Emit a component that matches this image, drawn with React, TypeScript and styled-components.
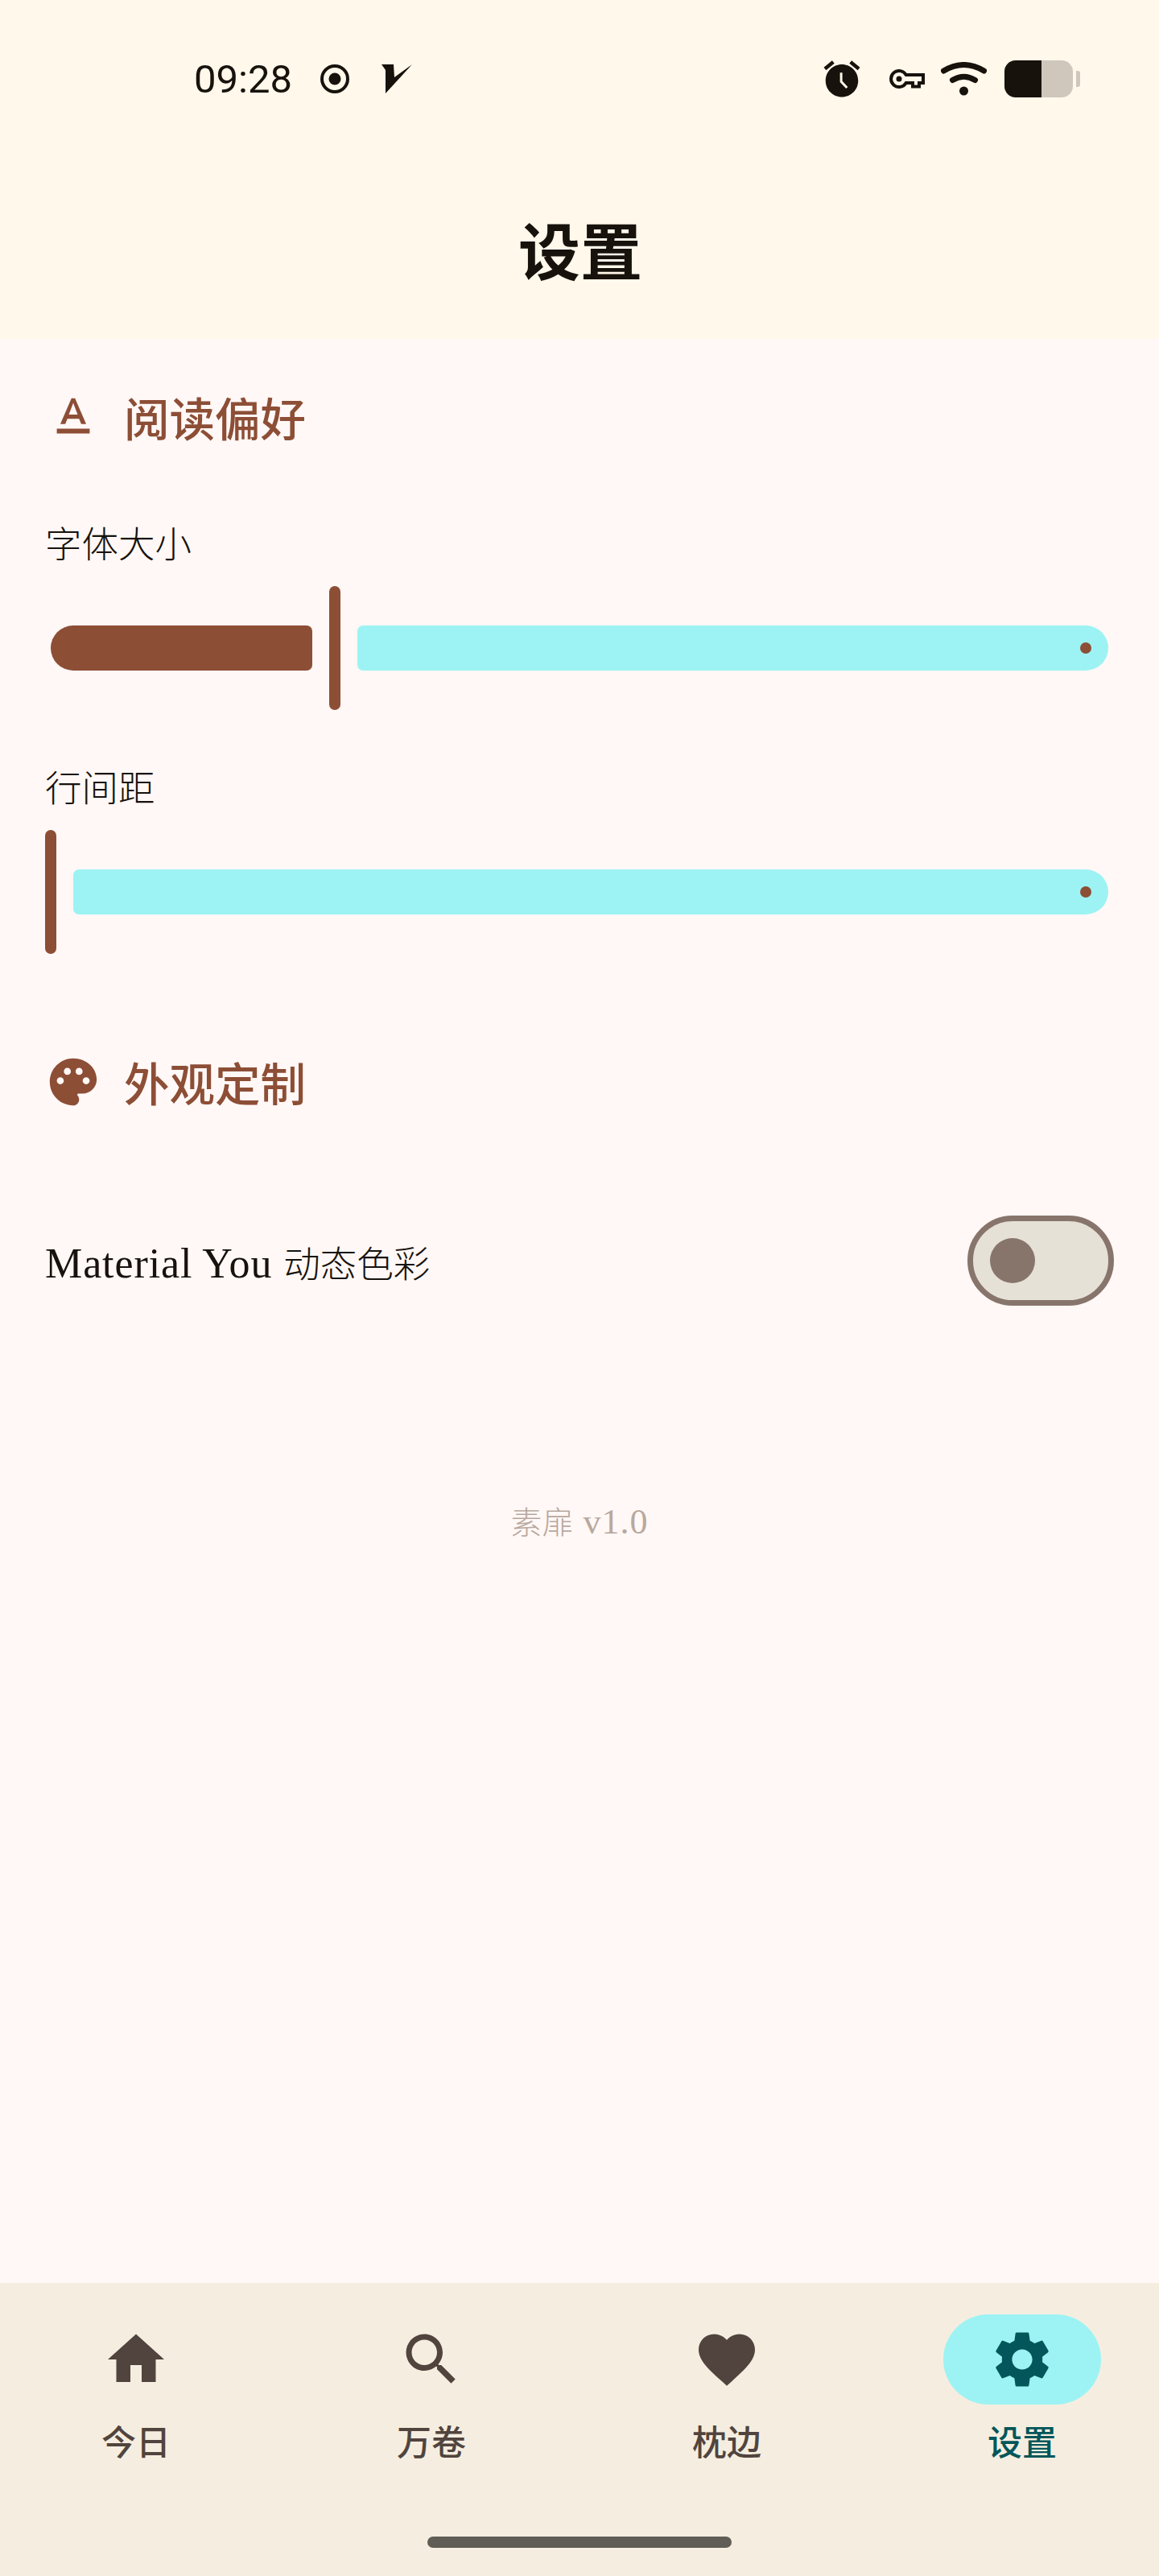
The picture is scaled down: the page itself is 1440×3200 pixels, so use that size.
import styled, { createGlobalStyle } from 'styled-components';

const SERIF = `'Liberation Serif', 'Noto Sans CJK SC', serif`;
const SANS = `'Noto Sans CJK SC', 'Noto Sans', sans-serif`;

const GlobalStyle = createGlobalStyle`
  html, body {
    margin: 0;
    padding: 0;
    background: #fff8f6;
  }
  * {
    box-sizing: border-box;
  }
`;

const Page = styled.div`
  display: flex;
  flex-direction: column;
  height: 3200px;
  background: #fff8f6;
  color: #17120c;
  font-family: ${SERIF};
`;

const Top = styled.header`
  height: 421px;
  background: #fff8eb;
`;

const StatusBar = styled.div`
  display: flex;
  align-items: center;
  height: 196px;
  padding: 0 98px 0 241px;
`;

const Time = styled.span`
  font-family: Roboto, sans-serif;
  font-size: 49px;
  line-height: 1;
  width: 120px;
  white-space: nowrap;
`;

const StatusLeft = styled.div`
  display: flex;
  align-items: center;
  gap: 37px;
`;

const StatusRight = styled.div`
  display: flex;
  align-items: center;
  gap: 20px;
  margin-left: auto;
`;

const VeeSvg = styled.svg`
  margin-left: 3px;
`;

const AlarmSvg = styled.svg`
  margin-right: 12px;
`;

const WifiSvg = styled.svg`
  margin-right: 2px;
`;

const Battery = styled.div`
  display: flex;
  align-items: center;
  gap: 4px;
`;

const BatteryBody = styled.div`
  width: 85px;
  height: 46px;
  border-radius: 14px;
  background: #cfc6bc;
  overflow: hidden;
`;

const BatteryLevel = styled.div<{ $width: number }>`
  width: ${p => p.$width}px;
  height: 100%;
  background: #17120c;
`;

const BatteryTip = styled.div`
  width: 5px;
  height: 20px;
  border-radius: 0 3px 3px 0;
  background: #cfc6bc;
`;

const Title = styled.h1`
  margin: 0;
  padding: 0 0 0 2px;
  height: 225px;
  display: flex;
  align-items: center;
  justify-content: center;
  font-family: ${SANS};
  font-size: 77px;
  font-weight: 700;
`;

const Content = styled.main`
  flex: 1;
  display: flex;
  flex-direction: column;
  padding: 62px 56px 0;
`;

const SectionHead = styled.div<{ $gapBelow: number }>`
  display: flex;
  align-items: center;
  gap: 28px;
  height: 70px;
  margin-bottom: ${p => p.$gapBelow}px;
  color: #8d4e36;
  svg {
    flex: none;
  }
`;

const SectionTitle = styled.h2`
  margin: 0 0 2px;
  font-family: ${SANS};
  font-size: 56.5px;
  font-weight: 500;
  line-height: 70px;
`;

const Label = styled.div`
  font-family: ${SERIF};
  font-size: 45.5px;
  font-weight: 300;
  line-height: 56px;
  padding-top: 2px;
  margin-bottom: 24px;
  height: 56px;
`;

const Slider = styled.div<{ $gapBelow: number }>`
  display: flex;
  align-items: center;
  gap: 21px;
  height: 154px;
  margin-right: 7px;
  margin-bottom: ${p => p.$gapBelow}px;
`;

const ActiveTrack = styled.div<{ $width: number }>`
  width: ${p => p.$width}px;
  height: 56px;
  margin-left: 7px;
  border-radius: 28px 7px 7px 28px;
  background: #8d4e36;
`;

const Handle = styled.div`
  flex: none;
  width: 14px;
  height: 154px;
  border-radius: 7px;
  background: #8d4e36;
`;

const InactiveTrack = styled.div`
  flex: 1;
  height: 56px;
  display: flex;
  align-items: center;
  justify-content: flex-end;
  padding-right: 21px;
  border-radius: 7px 28px 28px 7px;
  background: #9df3f3;
`;

const StopDot = styled.div`
  width: 14px;
  height: 14px;
  border-radius: 50%;
  background: #8d4e36;
`;

const ToggleRow = styled.div`
  display: flex;
  align-items: center;
  justify-content: space-between;
  height: 112px;
`;

const ToggleLabel = styled.span`
  padding-top: 4px;
  font-size: 52px;
  letter-spacing: 0.9px;
  line-height: 60px;
`;

const CjkText = styled.span<{ $size: number }>`
  font-family: ${SANS};
  font-size: ${p => p.$size}px;
  font-weight: 300;
  letter-spacing: 0;
`;

const Toggle = styled.div`
  display: flex;
  align-items: center;
  width: 182px;
  height: 112px;
  padding-left: 21px;
  border: 7px solid #87756c;
  border-radius: 56px;
  background: #e6e1d6;
`;

const Thumb = styled.div`
  width: 56px;
  height: 56px;
  border-radius: 50%;
  background: #87756c;
`;

const Version = styled.div`
  margin-top: 241px;
  text-align: center;
  font-size: 44px;
  letter-spacing: 1px;
  line-height: 50px;
  color: #b9a89e;
`;

const Nav = styled.nav`
  position: relative;
  display: flex;
  justify-content: space-between;
  height: 364px;
  padding: 39px 72px 0 71px;
  background: #f5eee0;
`;

const NavItem = styled.div<{ $active?: boolean }>`
  display: flex;
  flex-direction: column;
  align-items: center;
  width: 196px;
  color: ${p => (p.$active ? '#03565a' : '#51443e')};
`;

const NavPill = styled.div<{ $active?: boolean }>`
  display: flex;
  align-items: center;
  justify-content: center;
  width: 196px;
  height: 112px;
  border-radius: 56px;
  background: ${p => (p.$active ? '#9df3f3' : 'transparent')};
`;

const NavLabel = styled.span`
  margin-top: 14px;
  font-family: ${SANS};
  font-size: 43px;
  font-weight: 500;
  line-height: 60px;
`;

const HomeBar = styled.div`
  position: absolute;
  left: 531px;
  bottom: 35px;
  width: 378px;
  height: 14px;
  border-radius: 7px;
  background: #605d56;
`;

const PATHS = {
  text: 'M5 17v2h14v-2H5zm4.5-4.2h5l.9 2.2h2.1L12.75 4h-1.5L6.5 15h2.1l.9-2.2zM12 5.98L13.87 11h-3.74L12 5.98z',
  palette:
    'M12 2C6.49 2 2 6.49 2 12s4.49 10 10 10c1.38 0 2.5-1.12 2.5-2.5 0-.61-.23-1.2-.64-1.67-.08-.1-.13-.21-.13-.33 0-.28.22-.5.5-.5H16c3.31 0 6-2.69 6-6 0-4.96-4.49-9-10-9zm5.5 11c-.83 0-1.5-.67-1.5-1.5s.67-1.5 1.5-1.5 1.5.67 1.5 1.5-.67 1.5-1.5 1.5zm-3-4c-.83 0-1.5-.67-1.5-1.5S13.67 6 14.5 6s1.5.67 1.5 1.5S15.33 9 14.5 9zM5 11.5c0-.83.67-1.5 1.5-1.5s1.5.67 1.5 1.5S7.33 13 6.5 13 5 12.33 5 11.5zm6-4c0 .83-.67 1.5-1.5 1.5S8 8.33 8 7.5 8.67 6 9.5 6s1.5.67 1.5 1.5z',
  home: 'M10 20v-6h4v6h5v-8h3L12 3 2 12h3v8z',
  search:
    'M15.5 14h-.79l-.28-.27C15.41 12.59 16 11.11 16 9.5 16 5.91 13.09 3 9.5 3S3 5.91 3 9.5 5.91 16 9.5 16c1.61 0 3.09-.59 4.23-1.57l.27.28v.79l5 4.99L20.49 19l-4.99-5zm-6 0C7.01 14 5 11.99 5 9.5S7.01 5 9.5 5 14 7.01 14 9.5 11.99 14 9.5 14z',
  heart:
    'M12 21.35l-1.45-1.32C5.4 15.36 2 12.28 2 8.5 2 5.42 4.42 3 7.5 3c1.74 0 3.41.81 4.5 2.09C13.09 3.81 14.76 3 16.5 3 19.58 3 22 5.42 22 8.5c0 3.78-3.4 6.86-8.55 11.54L12 21.35z',
  gear: 'M19.14 12.94c.04-.3.06-.61.06-.94 0-.32-.02-.64-.07-.94l2.03-1.58c.18-.14.23-.41.12-.61l-1.92-3.32c-.12-.22-.37-.29-.59-.22l-2.39.96c-.5-.38-1.03-.7-1.62-.94l-.36-2.54c-.04-.24-.24-.41-.48-.41h-3.84c-.24 0-.43.17-.47.41l-.36 2.54c-.59.24-1.13.57-1.62.94l-2.39-.96c-.22-.08-.47 0-.59.22L2.74 8.87c-.12.21-.08.47.12.61l2.03 1.58c-.05.3-.09.63-.09.94s.02.64.07.94l-2.03 1.58c-.18.14-.23.41-.12.61l1.92 3.32c.12.22.37.29.59.22l2.39-.96c.5.38 1.03.7 1.62.94l.36 2.54c.05.24.24.41.48.41h3.84c.24 0 .44-.17.47-.41l.36-2.54c.59-.24 1.13-.56 1.62-.94l2.39.96c.22.08.47 0 .59-.22l1.92-3.32c.12-.22.07-.47-.12-.61l-2.01-1.58zM12 15.6c-1.98 0-3.6-1.62-3.6-3.6s1.62-3.6 3.6-3.6 3.6 1.62 3.6 3.6-1.62 3.6-3.6 3.6z',
};

const Icon: React.FC<{ d: string; size: number }> = ({ d, size }) => (
  <svg width={size} height={size} viewBox="0 0 24 24" fill="currentColor">
    <path d={d} />
  </svg>
);

const RecordIcon = () => (
  <svg width="36" height="36" viewBox="0 0 36 36">
    <circle cx="18" cy="18" r="16" fill="none" stroke="#17120c" strokeWidth="4" />
    <circle cx="18" cy="18" r="7.5" fill="#17120c" />
  </svg>
);

const VeeIcon = () => (
  <VeeSvg width="38" height="36" viewBox="0 0 38 36">
    <polygon points="0,0 15,0 16,16 38,0 5,36 5,7" fill="#17120c" />
  </VeeSvg>
);

const AlarmIcon = () => (
  <AlarmSvg width="54" height="54" viewBox="0 0 24 24">
    <path
      d="M22 5.72l-4.6-3.86-1.29 1.53 4.6 3.86L22 5.72zM7.88 3.39L6.6 1.86 2 5.71l1.29 1.53 4.59-3.85zM12 4c-4.97 0-9 4.03-9 9s4.02 9 9 9c4.97 0 9-4.03 9-9s-4.03-9-9-9z"
      fill="#17120c"
    />
    <path d="M11.6 8.5v5l3.2 3.4" fill="none" stroke="#fff8eb" strokeWidth="1.3" />
  </AlarmSvg>
);

const KeyIcon = () => (
  <svg width="44" height="24" viewBox="0 0 44 24">
    <path
      d="M20.7 7H42V17H37V21.5H29V17H20.7A10 10 0 1 1 20.7 7Z"
      fill="none"
      stroke="#17120c"
      strokeWidth="4"
    />
    <circle cx="12" cy="12" r="3.5" fill="#17120c" />
  </svg>
);

const WifiIcon = () => (
  <WifiSvg width="57" height="42" viewBox="0 0 57 42">
    <path d="M3.5 11Q28.5 -4 53.5 11" fill="none" stroke="#17120c" strokeWidth="7" strokeLinecap="round" />
    <path d="M14.5 22.5Q28.5 14 42.5 22.5" fill="none" stroke="#17120c" strokeWidth="7" strokeLinecap="round" />
    <circle cx="28.5" cy="36" r="5.5" fill="#17120c" />
  </WifiSvg>
);

const TABS = [
  { label: '今日', icon: PATHS.home },
  { label: '万卷', icon: PATHS.search },
  { label: '枕边', icon: PATHS.heart },
  { label: '设置', icon: PATHS.gear, active: true },
];

const App: React.FC = () => (
  <Page>
    <GlobalStyle />
    <Top>
      <StatusBar>
        <StatusLeft>
          <Time>09:28</Time>
          <RecordIcon />
          <VeeIcon />
        </StatusLeft>
        <StatusRight>
          <AlarmIcon />
          <KeyIcon />
          <WifiIcon />
          <Battery>
            <BatteryBody>
              <BatteryLevel $width={46} />
            </BatteryBody>
            <BatteryTip />
          </Battery>
        </StatusRight>
      </StatusBar>
      <Title>设置</Title>
    </Top>

    <Content>
      <SectionHead $gapBelow={95}>
        <Icon d={PATHS.text} size={70} />
        <SectionTitle>阅读偏好</SectionTitle>
      </SectionHead>

      <Label>字体大小</Label>
      <Slider $gapBelow={69}>
        <ActiveTrack $width={325} />
        <Handle />
        <InactiveTrack>
          <StopDot />
        </InactiveTrack>
      </Slider>

      <Label>行间距</Label>
      <Slider $gapBelow={124}>
        <Handle />
        <InactiveTrack>
          <StopDot />
        </InactiveTrack>
      </Slider>

      <SectionHead $gapBelow={131}>
        <Icon d={PATHS.palette} size={70} />
        <SectionTitle>外观定制</SectionTitle>
      </SectionHead>

      <ToggleRow>
        <ToggleLabel>
          Material You <CjkText $size={45.5}>动态色彩</CjkText>
        </ToggleLabel>
        <Toggle>
          <Thumb />
        </Toggle>
      </ToggleRow>

      <Version>
        <CjkText $size={39}>素扉</CjkText> v1.0
      </Version>
    </Content>

    <Nav>
      {TABS.map(tab => (
        <NavItem key={tab.label} $active={tab.active}>
          <NavPill $active={tab.active}>
            <Icon d={tab.icon} size={84} />
          </NavPill>
          <NavLabel>{tab.label}</NavLabel>
        </NavItem>
      ))}
      <HomeBar />
    </Nav>
  </Page>
);

export default App;
